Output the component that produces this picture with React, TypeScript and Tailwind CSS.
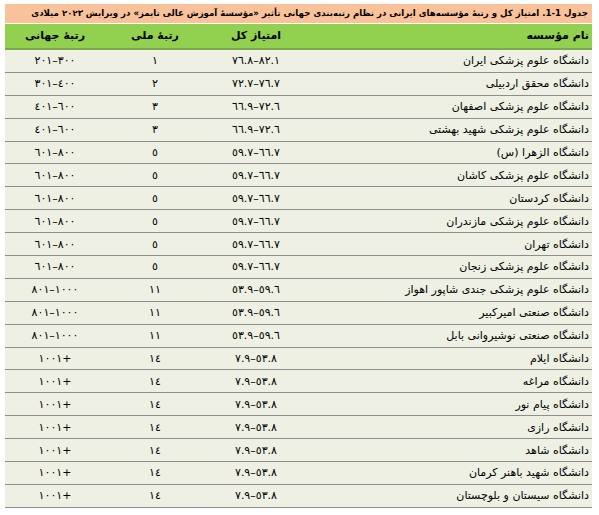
import React from 'react';

type Row = { name: string; score: string; national: string; world: string };

// numbers are written in logical (right-to-left) order so they read like the printed table
const rows: Row[] = [
    { name: 'دانشگاه علوم پزشکی ایران', score: '٨٢.١–٧٦.٨', national: '١', world: '٣٠٠–٢٠١' },
    { name: 'دانشگاه محقق اردبیلی', score: '٧٦.٧–٧٢.٧', national: '٢', world: '٤٠٠–٣٠١' },
    { name: 'دانشگاه علوم پزشکی اصفهان', score: '٧٢.٦–٦٦.٩', national: '٣', world: '٦٠٠–٤٠١' },
    { name: 'دانشگاه علوم پزشکی شهید بهشتی', score: '٧٢.٦–٦٦.٩', national: '٣', world: '٦٠٠–٤٠١' },
    { name: 'دانشگاه الزهرا (س)', score: '٦٦.٧–٥٩.٧', national: '٥', world: '٨٠٠–٦٠١' },
    { name: 'دانشگاه علوم پزشکی کاشان', score: '٦٦.٧–٥٩.٧', national: '٥', world: '٨٠٠–٦٠١' },
    { name: 'دانشگاه کردستان', score: '٦٦.٧–٥٩.٧', national: '٥', world: '٨٠٠–٦٠١' },
    { name: 'دانشگاه علوم پزشکی مازندران', score: '٦٦.٧–٥٩.٧', national: '٥', world: '٨٠٠–٦٠١' },
    { name: 'دانشگاه تهران', score: '٦٦.٧–٥٩.٧', national: '٥', world: '٨٠٠–٦٠١' },
    { name: 'دانشگاه علوم پزشکی زنجان', score: '٦٦.٧–٥٩.٧', national: '٥', world: '٨٠٠–٦٠١' },
    { name: 'دانشگاه علوم پزشکی جندی شاپور اهواز', score: '٥٩.٦–٥٣.٩', national: '١١', world: '١٠٠٠–٨٠١' },
    { name: 'دانشگاه صنعتی امیرکبیر', score: '٥٩.٦–٥٣.٩', national: '١١', world: '١٠٠٠–٨٠١' },
    { name: 'دانشگاه صنعتی نوشیروانی بابل', score: '٥٩.٦–٥٣.٩', national: '١١', world: '١٠٠٠–٨٠١' },
    { name: 'دانشگاه ایلام', score: '٥٣.٨–٧.٩', national: '١٤', world: '+١٠٠١' },
    { name: 'دانشگاه مراغه', score: '٥٣.٨–٧.٩', national: '١٤', world: '+١٠٠١' },
    { name: 'دانشگاه پیام نور', score: '٥٣.٨–٧.٩', national: '١٤', world: '+١٠٠١' },
    { name: 'دانشگاه رازی', score: '٥٣.٨–٧.٩', national: '١٤', world: '+١٠٠١' },
    { name: 'دانشگاه شاهد', score: '٥٣.٨–٧.٩', national: '١٤', world: '+١٠٠١' },
    { name: 'دانشگاه شهید باهنر کرمان', score: '٥٣.٨–٧.٩', national: '١٤', world: '+١٠٠١' },
    { name: 'دانشگاه سیستان و بلوچستان', score: '٥٣.٨–٧.٩', national: '١٤', world: '+١٠٠١' },
];

const cols = 'grid grid-cols-[1fr_102px_100px_100px]';

const App: React.FC = () => {
    return (
        <div
            dir="rtl"
            className="w-[599px] h-[515px] bg-white pt-[4px] px-[4px] text-black font-['DejaVu_Sans',sans-serif]"
        >
            <div className="ml-[1px] mr-[3px]">
                {/* title */}
                <div className="h-[19px] bg-[#f9c29a] flex items-center pr-[4px] text-[8.6px] font-bold leading-none whitespace-nowrap">
                    جدول 1-1. امتیاز کل و رتبهٔ مؤسسه‌های ایرانی در نظام رتبه‌بندی جهانی تأثیر «مؤسسهٔ آموزش عالی تایمز» در ویرایش ٢٠٢٣ میلادی
                </div>

                {/* header */}
                <div className={`${cols} h-[26px] mt-[1px] bg-[#92d050] border-b-[2px] border-[#7aa84a] items-center text-[11px] font-bold`}>
                    <div className="pr-[3px]">نام مؤسسه</div>
                    <div className="text-center">امتیاز کل</div>
                    <div className="text-center">رتبهٔ ملی</div>
                    <div className="text-center">رتبهٔ جهانی</div>
                </div>

                {/* body */}
                {rows.map((r, i) => (
                    <div
                        key={i}
                        className={`${cols} h-[22.9px] bg-[#edf0e3] border-b border-[#8e8e8e] items-center text-[11px] leading-none`}
                    >
                        <div className="pr-[3px] whitespace-nowrap">{r.name}</div>
                        <div className="text-center">{r.score}</div>
                        <div className="text-center">{r.national}</div>
                        <div className="text-center">{r.world}</div>
                    </div>
                ))}
            </div>
        </div>
    );
};

export default App;
